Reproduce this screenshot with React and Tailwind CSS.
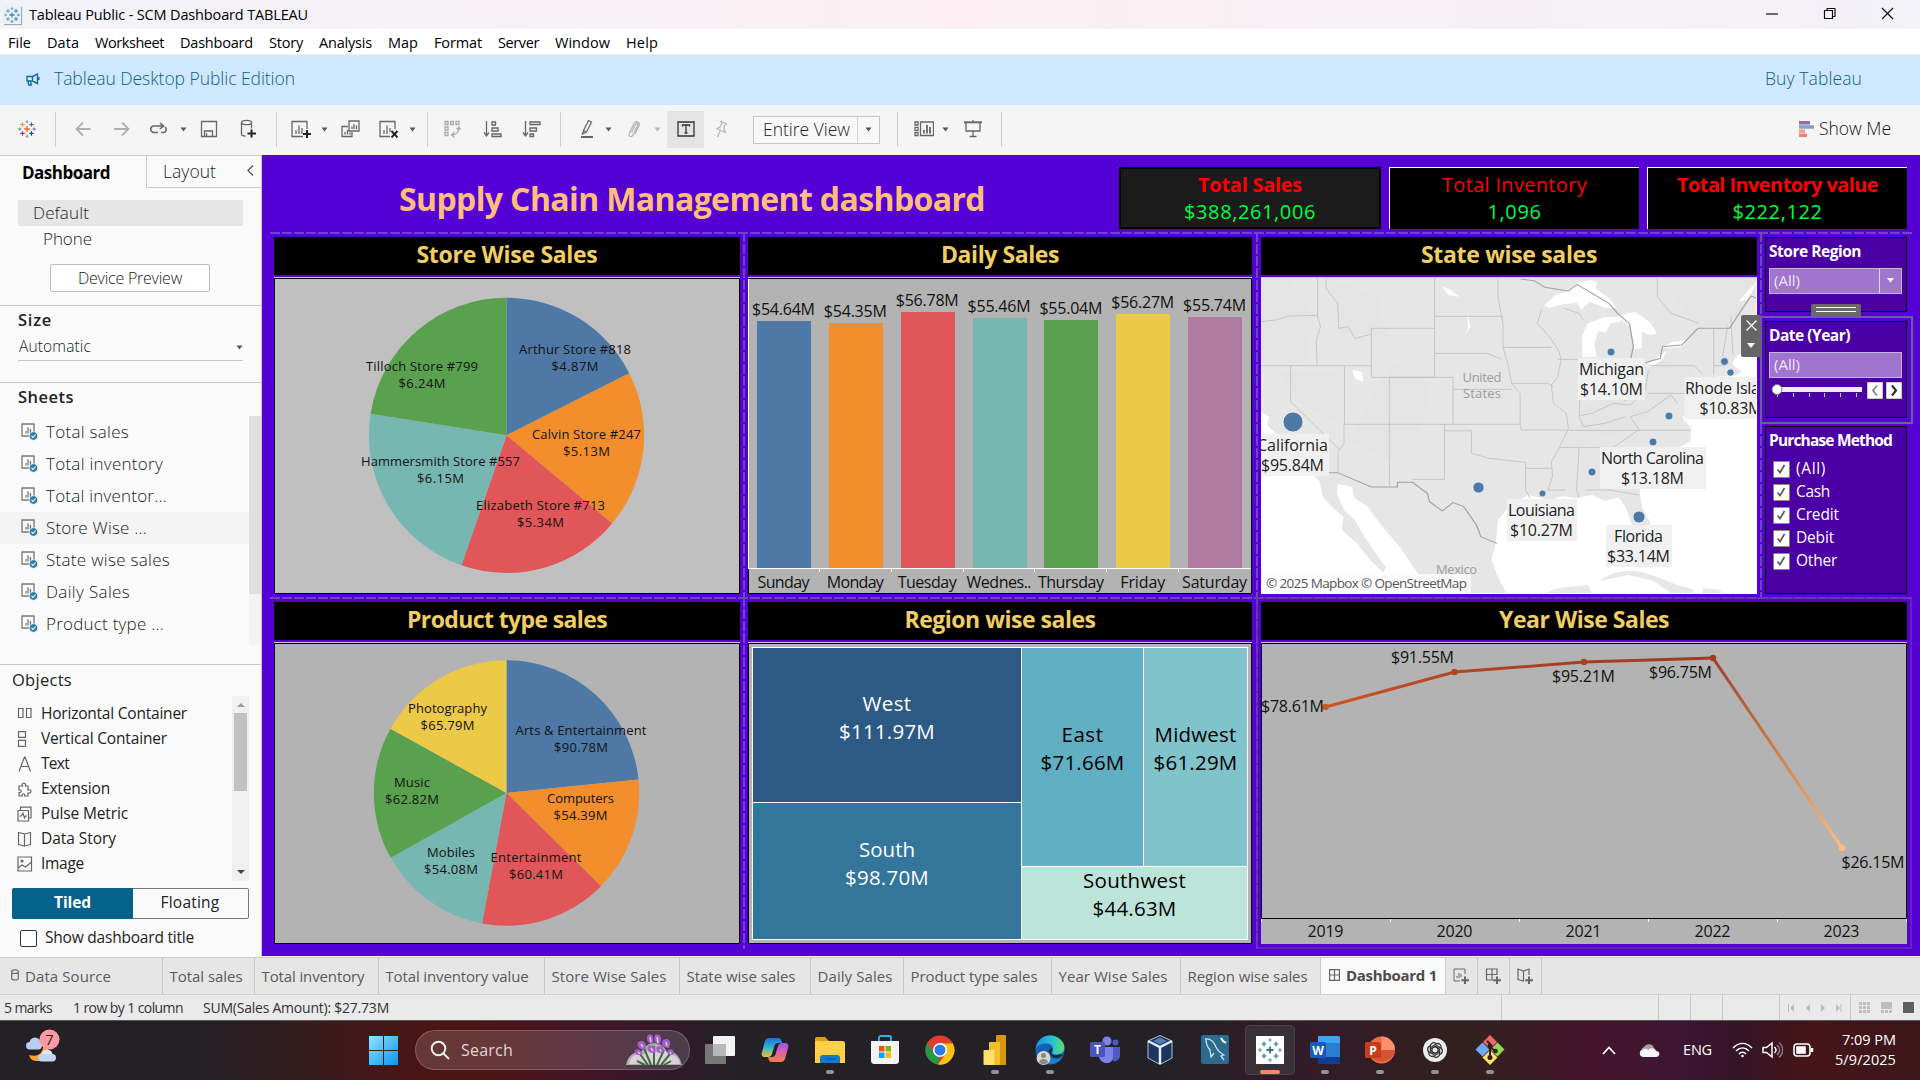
import React, { useLayoutEffect, useRef } from "react";

/* Label whose tracking is adjusted so that it spans w pixels. */
function T({ w, className = "", children }) {
  const ref = useRef(null);
  useLayoutEffect(() => {
    const el = ref.current;
    if (!w || !el) return;
    el.style.letterSpacing = "0px";
    const natural = el.getBoundingClientRect().width;
    el.style.letterSpacing = `${(w - natural) / el.textContent.length}px`;
  }, [w, children]);
  return (
    <span ref={ref} className={"block w-fit shrink-0 whitespace-nowrap leading-none " + className}>
      {children}
    </span>
  );
}

/* SVG text centred on (x, y), w pixels wide. */
function L({ x, y, w, s = 16, fill = "#111", weight = 400, children }) {
  return (
    <text x={x} y={y + s * 0.355} fontSize={s} fill={fill} fontWeight={weight} textAnchor="middle" textLength={w}>
      {children}
    </text>
  );
}

function Svg({ w = 20, h = 20, className = "", children, ...p }) {
  return (
    <svg width={w} height={h} viewBox={`0 0 ${w} ${h}`} fill="none" stroke="#666" strokeWidth="1.3" className={"shrink-0 " + className} {...p}>
      {children}
    </svg>
  );
}

const Caret = ({ className = "", light }) => (
  <Svg w={7} h={5} className={className} stroke="none" fill={light ? "#b5b5b5" : "#555"}>
    <path d="M0.5 0.5h6L3.5 4.5z" />
  </Svg>
);
const Sep = ({ className = "" }) => <div className={"h-[35px] w-px shrink-0 bg-[#cfcfcf] " + className} />;

function TableauMark({ size = 18, className = "", mono }) {
  const c = mono
    ? ["#3d85b0", "#5f9fc4", "#3d85b0", "#5f9fc4", "#3d85b0", "#5f9fc4", "#3d85b0", "#5f9fc4", "#3d85b0"]
    : ["#eb6f2d", "#e8a02c", "#5b6591", "#c62e52", "#1f457e", "#5fa3b8", "#7099a6", "#59879b", "#5f6ea0"];
  return (
    <svg width={size} height={size} viewBox="0 0 20 20" className={"shrink-0 " + className} strokeWidth="1.3">
      <path d="M10 6.8v6.4M6.8 10h6.4" stroke={c[0]} strokeWidth="1.6" />
      <path d="M5 2.6v5M2.5 5.1h5" stroke={c[1]} />
      <path d="M15 2.6v5M12.5 5.1h5" stroke={c[2]} />
      <path d="M5 12.4v5M2.5 14.9h5" stroke={c[3]} />
      <path d="M15 12.4v5M12.5 14.9h5" stroke={c[4]} />
      <path d="M10 0v4M8.2 2h3.6" stroke={c[5]} strokeWidth="1" />
      <path d="M10 16v4M8.2 18h3.6" stroke={c[6]} strokeWidth="1" />
      <path d="M2 8.2v3.6M0 10h4" stroke={c[7]} strokeWidth="1" />
      <path d="M18 8.2v3.6M16 10h4" stroke={c[8]} strokeWidth="1" />
    </svg>
  );
}

const MENU = [
  ["File", 23], ["Data", 32], ["Worksheet", 69], ["Dashboard", 73], ["Story", 34], ["Analysis", 53],
  ["Map", 30], ["Format", 48], ["Server", 41], ["Window", 55], ["Help", 32],
];

function TitleBar() {
  return (
    <div className="flex h-[29px] items-center bg-gradient-to-r from-[#f2f3f9] via-[#fbeff3] to-[#f3f2f8] pl-[3px] text-black">
      <div className="flex h-[18px] w-[18px] items-center justify-center bg-[#e9f1f6] shadow-[1px_1px_1px_#aaa]">
        <TableauMark size={16} mono />
      </div>
      <T w={279} className="ml-[8px] mt-[1px] text-[14.5px]">Tableau Public - SCM Dashboard TABLEAU</T>
      <Svg w={130} h={14} className="-mt-[3px] ml-auto mr-[25px]" stroke="#111" strokeWidth="1.2">
        <path d="M1 8h12" />
        <path d="M59.5 4.5h8v8h-8zM62 4.5v-2h8v8h-2.500" strokeLinejoin="round" />
        <path d="M117 2l11 11M128 2l-11 11" />
      </Svg>
    </div>
  );
}

function MenuBar() {
  return (
    <div className="flex h-[26px] items-center gap-[16px] border-b border-[#eee] bg-white pl-[8px] pt-[3px] text-black">
      {MENU.map(([m, w]) => <T key={m} w={w} className="text-[14.5px]">{m}</T>)}
    </div>
  );
}

function Banner() {
  return (
    <div className="flex h-[50px] items-center bg-[#cfe8fe] pb-[2px] pl-[26px] pr-[58px] text-[#1a6b93]">
      <Svg w={14} h={13} stroke="#1a6b93" strokeWidth="1.4">
        <path d="M1 3.500h5.500L11.500 1v9.500L6.500 8H1zM2 8l.7 4h2.500L4.600 8M6.500 3.500V8M12.800 4v3" />
      </Svg>
      <T w={241} className="ml-[14px] text-[17.5px] font-light text-[#0d5f8a]">Tableau Desktop Public Edition</T>
      <T w={97} className="ml-auto text-[17.5px] font-light text-[#0d5f8a]">Buy Tableau</T>
    </div>
  );
}

function Toolbar() {
  return (
    <div className="flex h-[50px] items-center bg-[#f5f5f5] pb-[2px]">
      <TableauMark size={18} className="ml-[18px]" />
      <Sep className="ml-[19px]" />
      <Svg w={16} h={16} className="ml-[19px]" stroke="#b0b0b0" strokeWidth="1.8"><path d="M15.500 8H1.500M8 1.500L1.500 8L8 14.500" /></Svg>
      <Svg w={17} h={16} className="ml-[22px]" stroke="#b0b0b0" strokeWidth="1.8"><path d="M1 8h14.500M9 1.500L15.500 8L9 14.500" /></Svg>
      <Svg w={18} h={14} className="ml-[20px]" strokeWidth="1.600"><path d="M8 10.500H4a3 3 0 010-6.500h9M10 1l3.500 3L10 7M15 5.200a3 3 0 01-1 5.300h-3" /></Svg>
      <Caret className="ml-[12px]" />
      <Svg w={18} h={18} className="ml-[13px]"><path d="M1.500 1.500h15v15h-15zM4.500 16v-5h8v5M6.500 13v3" /></Svg>
      <Svg w={17} h={20} className="ml-[22px]"><ellipse cx="6.500" cy="3.500" rx="5" ry="2.200" /><path d="M1.500 3.500v11.500c0 1 1.500 2 4 2M11.500 3.500v6" /><path d="M11.500 10.500v8M7.500 14.500h8.500" stroke="#222" strokeWidth="2" /></Svg>
      <Sep className="ml-[19px]" />
      <Svg w={20} h={18} className="ml-[14px]"><path d="M16 9V1.500H1v15h11M5 14v-4M8 14V5.500M11 14V8" /><path d="M16 10v8M12 14h8" stroke="#222" strokeWidth="2" /></Svg>
      <Caret className="ml-[10px]" />
      <Svg w={19} h={18} className="ml-[13px]"><path d="M8 1h10v10H8zM11 9V6.500M13 9V4M15.500 9V5.500M7 6.500H1v10h10V12M4 14.500V12M6.500 14.500V10M9 14.500v-2" /></Svg>
      <Svg w={20} h={18} className="ml-[19px]"><path d="M16 9V1.500H1v15h10M5 14v-4M8 14V5.500M11 12V8" /><path d="M12.500 11l6 6.500M18.500 11l-6 6.500" stroke="#222" strokeWidth="1.900" /></Svg>
      <Caret className="ml-[10px]" />
      <Sep className="ml-[11px]" />
      <Svg w={17} h={18} className="ml-[16px]" stroke="#aaa"><path d="M1 1.500h3v3H1zM6.500 1.500h3v3h-3zM12 1.500h3v3h-3zM1 7h3v3H1zM1 12.500h3v3H1zM15 7c0 5-3 8-7 8M10.500 12l-3 3 3 2.500M12.500 9.500L15 7l1.500 2.500" /></Svg>
      <Svg w={19} h={18} className="ml-[22px]"><path d="M3.500 1v14.500M1 12.500l2.500 3.500L6 12.500M9 2h3.500v3H9zM9 8h6v3H9zM9 14h9v2.500H9z" /></Svg>
      <Svg w={19} h={18} className="ml-[20px]"><path d="M3.500 1v14.500M1 12.500l2.500 3.500L6 12.500M8 2h10v2.500H8zM8 8h6.500v3H8zM8 14h3.500v2.500H8z" /></Svg>
      <Sep className="ml-[19px]" />
      <Svg w={15} h={20} className="ml-[19px]"><path d="M3.500 11.500L8.500 1.500l3 1.500-5 10zM3.500 11.500L2.500 15l4-2" /><path d="M1 18h12" strokeWidth="2" /></Svg>
      <Caret className="ml-[10px]" />
      <Svg w={15} h={18} className="ml-[14px]" stroke="#b5b5b5"><path d="M5.500 12.500l4-8c1-2 3-1 2.300.700L7 15c-1.500 3-5 1.500-3.700-1.500l4.700-10C9.500 0 14.500 2 13 5.500L9 14" /></Svg>
      <Caret className="ml-[13px]" light />
      <div className="ml-[6px] flex h-[37px] w-[37px] shrink-0 items-center justify-center bg-[#e4e4e4]">
        <Svg w={18} h={16} stroke="#333"><path d="M1 1h16v14H1zM5.500 5.500V4h7v1.500M9 4v8M7.500 12h3" /></Svg>
      </div>
      <Svg w={14} h={18} className="ml-[10px]" stroke="#b5b5b5"><path d="M6.500 1l6 3-2 1.500-.5 4 1.500 3-4.500-2-4-2 3-1.500 2-4zM6 11l-2.500 6" /></Svg>
      <div className="ml-[25px] mt-[1px] flex h-[28px] w-[127px] shrink-0 items-center border border-[#c4c4c4] bg-[#f8f8f8] pl-[9px] text-[#222]">
        <T w={87} className="text-[17.5px] font-light">Entire View</T>
        <div className="ml-auto flex h-full w-[22px] items-center justify-center border-l border-[#d4d4d4]"><Caret /></div>
      </div>
      <Sep className="ml-[17px]" />
      <Svg w={20} h={16} className="ml-[16px]"><path d="M6.500 1h13v13.500h-13zM1 1h3v3H1zM1 6.300h3v3H1zM1 11.500h3v3H1z" /><path d="M10 12.500V9M13 12.500V4M16 12.500V6" strokeWidth="1.800" /></Svg>
      <Caret className="ml-[8px]" />
      <Svg w={18} h={18} className="ml-[15px]"><path d="M0 2.300h18" strokeWidth="2" /><path d="M2 3v8h14V3M9 11v5M5.500 16.500h7M9 0v2" /></Svg>
      <Sep className="ml-[19px]" />
      <div className="ml-auto flex items-center pr-[29px]">
        <Svg w={15} h={16} stroke="none">
          <path d="M0 0h11v3.500H0z" fill="#8c72a0" /><path d="M0 4.200h15v3.500H0z" fill="#7ea4cb" />
          <path d="M0 8.400h6v3.500H0z" fill="#f6a276" /><path d="M0 12.500h8v3.500H0z" fill="#f27b86" />
        </Svg>
        <T w={72} className="ml-[5px] text-[17.5px] font-light text-[#111]">Show Me</T>
      </div>
    </div>
  );
}

const SHEETS = [
  ["Total sales", 83], ["Total inventory", 117], ["Total inventor...", 121], ["Store Wise ...", 101],
  ["State wise sales", 124], ["Daily Sales", 84], ["Product type ...", 118],
];

const OBJECTS = [
  ["Horizontal Container", 146, <path d="M1.500 2.500h4.500v9H1.500zM9.500 2.500H14v9H9.500z" />],
  ["Vertical Container", 126, <path d="M1.500 0.700h7v5.600h-7zM1.500 9.300h7v6h-7z" />],
  ["Text", 28, <path d="M2 15.500L7.500 1h.5l5.500 14.500M3.800 10.500h7.900" />],
  ["Extension", 69, <path d="M2 5h3.500c-1.500-4 4-4 3 0H11v4c4-1.500 4 4 0 3v3H7.500c1-3-3-3-2.500 0H2v-3.500c3 .5 3-3 0-2.500z" />],
  ["Pulse Metric", 87, <path d="M1 4.500h10.500v10.500H1zM3.500 4V1.200h10.500V12H12M2.500 10h2l1.500-3 1.500 5 1-2h1.500" />],
  ["Data Story", 75, <path d="M7.500 3v12L1.500 13.500V1.500zM7.500 3l6-1.500v12L7.500 15" />],
  ["Image", 43, <><path d="M1 1h13.500v14H1zM1 12l4-3 3.500 2 6-5" /><circle cx="5" cy="5" r="1" fill="#666" /></>],
];

function SheetIcon() {
  return (
    <Svg w={18} h={18} stroke="#777">
      <path d="M1 1h12v12H1zM5 10.500V8M7 10.500V4.500M9.500 10.500V6" />
      <circle cx="12.500" cy="13" r="4.300" fill="#2f7ba1" stroke="#fafafa" strokeWidth=".8" />
      <path d="M10.500 13l1.500 1.500 2.700-3" stroke="#fff" strokeWidth="1.100" />
    </Svg>
  );
}

function Sidebar() {
  return (
    <div className="flex h-[802px] w-[262px] shrink-0 flex-col border-r border-[#c4c4c4] bg-[#fafafa] text-[#222]">
      <div className="flex h-[33px] shrink-0 border-t border-[#ccc]">
        <div className="flex w-[146px] items-center pl-[22px]"><T w={88} className="text-[17px] font-bold text-black">Dashboard</T></div>
        <div className="flex grow items-center border-b border-l border-[#ccc] pl-[16px] pr-[7px]">
          <T w={53} className="text-[17.5px] font-light">Layout</T>
          <Svg w={7} h={11} className="-mt-[3px] ml-auto" stroke="#555"><path d="M6 0.500L1 5.500l5 5" /></Svg>
        </div>
      </div>
      <div className="mt-[12px] ml-[18px] flex h-[26px] w-[225px] shrink-0 items-center bg-[#e6e6e6] pb-[1px] pl-[15px]"><T w={56} className="text-[17px] font-light">Default</T></div>
      <div className="ml-[43px] flex h-[26px] shrink-0 items-center pb-[2px]"><T w={49} className="text-[17px] font-light">Phone</T></div>
      <div className="mt-[12px] ml-[50px] flex h-[28px] w-[160px] shrink-0 items-center justify-center rounded-[2px] border border-[#bdbdbd] bg-white"><T w={104} className="text-[16px] font-light">Device Preview</T></div>
      <div className="mt-[13px] h-px shrink-0 bg-[#c8c8c8]" />
      <div className="mt-[6px] ml-[18px]"><T w={34} className="text-[16.5px] font-semibold">Size</T></div>
      <div className="ml-[18px] mt-[6px] flex h-[26px] w-[225px] shrink-0 items-center border-b border-[#c4c4c4] pl-[1px]">
        <T w={72} className="text-[15.5px] font-light">Automatic</T><Caret className="ml-auto" />
      </div>
      <div className="mt-[21px] h-px shrink-0 bg-[#c8c8c8]" />
      <div className="mt-[6px] ml-[18px] h-[27px] shrink-0"><T w={56} className="text-[16.5px] font-semibold">Sheets</T></div>
      <div className="flex h-[229px] shrink-0">
        <div className="w-[249px]">
          {SHEETS.map(([n, w], i) => (
            <div key={n} className={"flex h-[32px] items-center gap-[7px] pl-[21px] " + (i === 3 ? "bg-[#f4f4f4]" : "")}>
              <SheetIcon /><T w={w} className="text-[17px] font-light">{n}</T>
            </div>
          ))}
        </div>
        <div className="w-[12px] bg-[#f3f3f3]"><div className="h-[178px] bg-[#dfdfdf]" /></div>
      </div>
      <div className="mt-[19px] h-px shrink-0 bg-[#c4c4c4]" />
      <div className="mt-[7px] ml-[12px] h-[24px] shrink-0"><T w={60} className="text-[16.5px] font-medium">Objects</T></div>
      <div className="flex h-[185px] shrink-0">
        <div className="w-[232px] pt-[6px]">
          {OBJECTS.map(([n, w, icon]) => (
            <div key={n} className="flex h-[25px] items-center pl-[17px]">
              <Svg w={16} h={16} strokeWidth="1.200">{icon}</Svg><T w={w} className="ml-[8px] text-[15.5px]">{n}</T>
            </div>
          ))}
        </div>
        <div className="flex w-[17px] flex-col items-center bg-[#f0f0f0]">
          <Svg w={8} h={17} stroke="none" fill="#999"><path d="M0 11h8L4 7z" /></Svg>
          <div className="h-[78px] w-[13px] bg-[#c1c1c1]" />
          <Svg w={8} h={17} className="mt-auto" stroke="none" fill="#444"><path d="M0 6h8L4 10z" /></Svg>
        </div>
      </div>
      <div className="ml-[12px] mt-[7px] flex h-[31px] w-[237px] shrink-0 rounded-[2px] border border-[#777] text-[15.5px]">
        <div className="-m-px flex w-[121px] items-center justify-center rounded-l-[2px] bg-[#05628a] text-white"><T w={37} className="font-bold">Tiled</T></div>
        <div className="flex grow items-center justify-center"><T w={59}>Floating</T></div>
      </div>
      <div className="mt-[11px] ml-[20px] flex shrink-0 items-center">
        <div className="h-[17px] w-[17px] rounded-[2px] border border-[#333] bg-white" />
        <T w={149} className="ml-[8px] text-[15.5px]">Show dashboard title</T>
      </div>
    </div>
  );
}

function Kpi({ className, title, tw, bold, value, vw }) {
  return (
    <div className={"flex h-full flex-col items-center pt-[7px] text-[20px] " + className}>
      <T w={tw} className={bold ? "font-bold text-[#fe0000]" : "text-[#fe0000]"}>{title}</T>
      <T w={vw} className="mt-[7px] font-medium text-[#00fe3c]">{value}</T>
    </div>
  );
}

function Panel({ title, tw, className, children }) {
  return (
    <div className={"my-[3px] flex shrink-0 flex-col " + className}>
      <div className="flex h-[38px] shrink-0 items-center justify-center bg-black pb-[3px]"><T w={tw} className="text-[23px] font-bold text-[#f1ce63]">{title}</T></div>
      <div className="mt-[2px] grow border-t border-[#d0c8dc]">{children}</div>
    </div>
  );
}

const VDash = ({ className = "" }) => (
  <div className={"flex shrink-0 justify-center " + className}>
    <div className="-my-[2px] w-[2px] bg-[repeating-linear-gradient(180deg,#6a48bd_0_10px,transparent_10px_12px)]" />
  </div>
);
const HDash = () => <div className="mx-[8px] h-[2px] shrink-0 bg-[repeating-linear-gradient(90deg,#6a48bd_0_10px,transparent_10px_12px)]" />;

const COLORS = ["#4e79a7", "#f28e2b", "#e15759", "#76b7b2", "#59a14f", "#edc948", "#b07aa1"];

function Pie({ values, cx, cy, r }) {
  const total = values.reduce((a, b) => a + b, 0);
  let a = 0;
  return values.map((v, i) => {
    const b = a + (v / total) * Math.PI * 2;
    const d = `M${cx} ${cy}L${cx + r * Math.sin(a)} ${cy - r * Math.cos(a)}A${r} ${r} 0 0 1 ${cx + r * Math.sin(b)} ${cy - r * Math.cos(b)}Z`;
    a = b;
    return <path key={i} d={d} fill={COLORS[i]} />;
  });
}

const STORES = [
  ["Arthur Store #818", "$4.87M", 575, 349.5, 112], ["Calvin Store #247", "$5.13M", 586.5, 434.5, 109],
  ["Elizabeth Store #713", "$5.34M", 540.5, 505.5, 129], ["Hammersmith Store #557", "$6.15M", 440.5, 461.5, 159],
  ["Tilloch Store #799", "$6.24M", 422, 366.5, 112],
];
const PRODUCTS = [
  ["Arts & Entertainment", "$90.78M", 581, 730.5, 131], ["Computers", "$54.39M", 580.5, 798.5, 67],
  ["Entertainment", "$60.41M", 536, 857.5, 91], ["Mobiles", "$54.08M", 451, 852.5, 48],
  ["Music", "$62.82M", 412, 782.5, 36], ["Photography", "$65.79M", 447.500, 708.5, 79],
];

const StorePie = () => (
  <svg width="466" height="316" viewBox="274 278 466 316" className="block bg-[#c0c0c0]">
    <Pie values={[4.87, 5.13, 5.34, 6.15, 6.24]} cx={506.5} cy={435.3} r={137.6} />
    {STORES.map(([n, v, x, y, w]) => (
      <g key={n}><L x={x} y={y} w={w} s={13}>{n}</L><L x={x} y={y + 17.200} w={47} s={13}>{v}</L></g>
    ))}
    <path d="M274.500 278.500h465v315h-465z" fill="none" stroke="#000" />
  </svg>
);
const ProductPie = () => (
  <svg width="466" height="301" viewBox="274 643 466 301" className="block bg-[#b3b3b3]">
    <Pie values={[90.78, 54.39, 60.41, 54.08, 62.82, 65.79]} cx={506.5} cy={793} r={132.7} />
    {PRODUCTS.map(([n, v, x, y, w]) => (
      <g key={n}><L x={x} y={y} w={w} s={13}>{n}</L><L x={x} y={y + 17.200} w={54} s={13}>{v}</L></g>
    ))}
    <path d="M274.500 643.500h465v300h-465z" fill="none" stroke="#000" />
  </svg>
);

const DAYS = [
  ["Sunday", "$54.64M", 321, 52], ["Monday", "$54.35M", 323, 57], ["Tuesday", "$56.78M", 312, 59], ["Wednes..", "$55.46M", 318, 65],
  ["Thursday", "$55.04M", 320, 66], ["Friday", "$56.27M", 314, 45], ["Saturday", "$55.74M", 317, 65],
];
const DailyBars = () => (
  <svg width="504" height="316" viewBox="748 278 504 316" className="block bg-[#b3b3b3]">
    {DAYS.map(([n, v, top, w], i) => {
      const x = 757 + i * 71.85;
      return (
        <g key={n}>
          <rect x={Math.round(x)} y={top} width="54" height={568 - top} fill={COLORS[i]} />
          <L x={x + 26.5} y={top - 12} w={63}>{v}</L>
          <L x={x + 26.5} y={582} w={w}>{n}</L>
          {i > 0 && <path d={`M${Math.round(x - 10) + 0.5} 568v4`} stroke="#fff" />}
        </g>
      );
    })}
    <path d="M748 568.5h504M748.500 568V279" stroke="#fff" />
    <path d="M748 278.500h503.500V593.500H748.500V569" fill="none" stroke="#000" />
  </svg>
);

const Cell = ({ className, n, nw, v, vw }) => (
  <div className={"flex flex-col items-center text-[20.5px] " + className}><T w={nw}>{n}</T><T w={vw} className="mt-[7.5px]">{v}</T></div>
);
const Treemap = () => (
  <div className="flex h-[301px] w-[504px] border border-black bg-[#b3b3b3] px-[3px] pb-[3px] pt-[3px] text-black">
    <div className="flex grow gap-px border border-white bg-white">
      <div className="flex w-[268px] flex-col gap-px text-white">
        <Cell className="h-[154px] bg-[#2d5985] pt-[45px]" n="West" nw={49} v="$111.97M" vw={96} />
        <Cell className="grow bg-[#34759b] pt-[36px]" n="South" nw={56} v="$98.70M" vw={84} />
      </div>
      <div className="flex grow flex-col gap-px">
        <div className="flex h-[218px] gap-px">
          <Cell className="w-[121px] bg-[#60afc2] pt-[76px]" n="East" nw={42} v="$71.66M" vw={84} />
          <Cell className="grow bg-[#81c3cb] pt-[76px]" n="Midwest" nw={82} v="$61.29M" vw={84} />
        </div>
        <Cell className="grow bg-[#bce4d8] pt-[3px]" n="Southwest" nw={103} v="$44.63M" vw={84} />
      </div>
    </div>
  </div>
);

const POINTS = [[1325.5, 707, "#cf5422"], [1454.5, 672, "#b34524"], [1584, 662, "#a63f23"], [1713, 658, "#9e3d22"], [1842, 848, "#ffbd7b"]];
const YearLine = () => (
  <svg width="646" height="301" viewBox="1261 643 646 301" className="block bg-[#b3b3b3]">
    {POINTS.slice(1).map((p, i) => {
      const q = POINTS[i];
      return (
        <g key={i}>
          <linearGradient id={"seg" + i} gradientUnits="userSpaceOnUse" x1={q[0]} y1={q[1]} x2={p[0]} y2={p[1]}>
            <stop offset="0" stopColor={q[2]} /><stop offset="1" stopColor={p[2]} />
          </linearGradient>
          <path d={`M${q[0]} ${q[1]}L${p[0]} ${p[1]}`} stroke={`url(#seg${i})`} strokeWidth="3" />
        </g>
      );
    })}
    {POINTS.map(([x, y, c]) => <circle key={x} cx={x} cy={y} r="3.200" fill={c} />)}
    <L x={1292.5} y={706.5} w={63}>$78.61M</L><L x={1422.500} y={657.5} w={63}>$91.55M</L><L x={1583.5} y={676.5} w={63}>$95.21M</L>
    <L x={1680.5} y={672.5} w={63}>$96.75M</L><L x={1873} y={862.5} w={63}>$26.15M</L>
    {[0, 1, 2, 3, 4].map((i) => <L key={i} x={1325.500 + i * 129} y={931.8} w={36}>{2019 + i}</L>)}
    <path d="M1261.500 918.500V643.500H1906.500V918.500z" fill="none" stroke="#000" />
    <path d="M1261.500 919v3M1390.500 919v3M1519.500 919v3M1648.500 919v3M1777.500 919v3M1906.500 919v3" stroke="#fff" />
  </svg>
);

const DOTS = [[1293, 422, 10], [1611, 352, 4], [1724.500, 361.500, 4], [1730.500, 372.5, 3.700], [1669, 416, 4], [1653, 442, 4], [1592, 472, 4], [1478.500, 487.500, 5.600], [1542.500, 493.500, 3.500], [1639, 517, 6]];
const STATES = [
  ["Michigan", "$14.10M", 1611.5, 369, 65, 1578, 67], ["North Carolina", "$13.18M", 1652.5, 458, 103, 1600, 106],
  ["Louisiana", "$10.27M", 1541.5, 510, 67, 1507, 70], ["Florida", "$33.14M", 1638.5, 536, 49, 1606, 66], ["California", "$95.84M", 1292.5, 445, 71, 1257, 72],
];

function StateMap() {
  return (
    <svg width="496" height="316" viewBox="1261 278 496 316" className="block bg-[#e6e6e6]">
      <g transform="translate(1250 260) scale(.4274 .33333)">
        <g fill="#dfdfdf" opacity=".22">
          <path d="M26 54L90 60 150 170 130 310 26 300zM180 54L300 110 320 230 215 215zM330 310L420 370 400 520 330 600 230 540zM60 330L200 330 200 480 120 430z" />
          <path d="M780 440L850 400 960 300 1040 320 1000 400 900 500 760 560zM960 54L1187 54 1130 200 1050 205z" />
        </g>
        <g fill="#fff">
          <path d="M26 455L45 470 40 495 60 520 75 560 100 600 145 640 163 665 170 710 195 745 218 770 215 810 250 850 285 905 312 937 318 920 300 890 268 830 245 780 220 750 203 700 206 672 238 680 245 715 275 740 310 800 350 860 395 945 450 1000 26 1000z" />
          <path d="M1187 225L1168 262 1140 285 1128 312 1150 335 1135 347 1090 350 1045 380 1015 430 1022 455 1012 475 1032 505 1030 545 1005 560 985 590 945 625 918 655 912 700 918 745 938 790 930 835 912 830 892 790 880 745 862 712 830 722 800 705 760 715 735 708 700 720 650 705 610 735 580 780 575 850 565 900 580 950 600 1000 1187 1000z" />
          <path d="M688 137L715 105 745 92 765 68 795 60 812 66 808 85 840 115 858 145 830 143 795 125 775 150 765 128 735 132 700 143z" />
          <path d="M778 292L777 230 790 190 830 172 880 170 865 185 845 190 832 218 815 213 806 250 810 290zM860 168L900 155 935 185 952 220 938 226 917 215 917 265 896 268 888 200zM925 318L960 286 975 272 965 300 935 322zM960 265L985 248 1025 238 1010 262zM240 330L262 335 265 365 245 355zM448 78L470 90 490 110 465 105zM508 155L515 200 500 230 510 205zM1142 125L1187 62 1165 118z" />
        </g>
        <path d="M820 962C850 930 900 925 940 945L1000 975 1040 990 1030 1000 985 1000 945 963 885 945zM690 1000L720 985 790 975 800 1000zM1060 985L1100 990 1105 1000 1058 1000z" fill="#e7e7e7" />
        <g fill="none" stroke="#c0c0c0" strokeWidth="2.200">
          <path d="M158 54V170L165 200 155 240 157 317M26 185L60 180 90 168 158 166M178 54V85L205 130 208 205 230 200 245 235 284 223M284 205V352H432V54M284 205H432M26 317H284M95 317V425L210 570M221 317V493M221 493H633M206 640V575L220 550V493M326 352V678M326 352H475V493M432 169H592M432 280H555L590 298M475 388H612M455 493V658H380M455 512H518V580L560 595 645 607M645 607V690L655 715M592 262H705M580 54V110L592 190V262L605 320 612 370 632 400V493L635 510H745M612 370H697L710 380M645 625H705M720 298H780M683 148L672 190 700 230 722 270 728 300 720 350 705 375 710 430 740 460 745 505 725 560 705 605 708 650 697 690H738M772 300V420L770 468M735 145L770 160 780 180M843 295V400M770 468L800 460 850 430 890 435 925 390 932 330M745 511H1030M725 562H850M770 562L764 690 770 715M820 562L840 690H785M840 690L910 705M845 565L870 545 910 509M910 509L890 470 930 455 985 405M985 405L1000 430M932 400H1048L1075 370M932 317H1040L1060 345M953 54V110L985 160 1050 190M1085 205V317H1112M1105 290L1118 200M1085 345L1085 317M1125 170L1130 285M770 470L780 500 830 490 880 470M860 400L880 425" />
        </g>
        <g fill="none" stroke="#a2a2a2" strokeWidth="3">
          <path d="M633 57L665 62 690 82 745 93 765 73 840 130 860 160 888 192 897 260 890 300M925 308L960 295 965 260 1010 255 1048 205H1122L1145 160 1172 108 1187 115M180 638H205L284 681H345V667H380L415 700 420 725 450 753 475 728 500 740 530 795 540 830 578 850" />
        </g>
      </g>
      <L x={1482} y={377} w={39} s={13} fill="#9b9b9b">United</L><L x={1482} y={393} w={38} s={13} fill="#9b9b9b">States</L>
      <L x={1456.500} y={569} w={41} s={13} fill="#9b9b9b">Mexico</L>
      {STATES.map((s) => <rect key={s[0]} x={s[5]} y={s[3] - 11} width={s[6]} height="42" fill="#f0f0f0" />)}
      <rect x="1684.500" y="377" width="73" height="42" fill="#f0f0f0" />
      {STATES.map((s) => (
        <g key={s[0]}><L x={s[2]} y={s[3]} w={s[4]} fill="#222">{s[0]}</L><L x={s[2]} y={s[3] + 20.5} w={63} fill="#222">{s[1]}</L></g>
      ))}
      <L x={1732} y={388} w={94} fill="#222">Rhode Island</L><L x={1731} y={408.5} w={63} fill="#222">$10.83M</L>
      {DOTS.map(([x, y, r]) => <circle key={x} cx={x} cy={y} r={r} fill="#4e79a7" stroke="#fff" strokeWidth=".7" />)}
      <rect x="1261" y="574" width="210" height="19" fill="#fafafa" opacity=".85" />
      <L x={1366.500} y={583.5} w={201} s={13.500} fill="#555">© 2025 Mapbox © OpenStreetMap</L>
      <path d="M1261 593.500h497M1756.500 278v316" stroke="#fff" />
    </svg>
  );
}

const Field = ({ children }) => (
  <div className="mt-[8px] flex h-[26px] items-center border border-[#c7b0e6] bg-[#9f75d0] pl-[4px] text-[#efe8f8]"><T w={26} className="text-[15px]">(All)</T>{children}</div>
);
const METHODS = [["(All)", 30], ["Cash", 34], ["Credit", 43], ["Debit", 38], ["Other", 41]];

function Filters() {
  return (
    <div className="my-[3px] flex w-[142px] shrink-0 flex-col text-white">
      <div className="relative h-[75px] border border-black bg-[#4b00a5] pl-[3px] pr-[4px] pt-[6px]">
        <T w={92} className="text-[15.5px] font-bold">Store Region</T>
        <Field><div className="ml-auto flex h-full w-[22px] items-center justify-center border-l border-[#e0d4f0]"><Svg w={7} h={5} stroke="none" fill="#fff"><path d="M0 0h7L3.500 4.500z" /></Svg></div></Field>
        <div className="absolute left-[45px] top-[66px] flex h-[13px] w-[50px] flex-col items-center gap-[3px] rounded-t-[2px] bg-[#696969] pt-[3px]">
          <div className="h-px w-[40px] bg-white" /><div className="h-px w-[40px] bg-white" />
        </div>
      </div>
      <div className="relative mt-[9px] h-[97px] border border-black bg-[#4b00a5] pl-[3px] pr-[4px] pt-[6px]">
        <div className="absolute -left-[6px] -top-[6px] h-[108px] w-[153px] border-2 border-[#69629a]" />
        <div className="absolute -left-[25px] -top-[7px] flex h-[42px] w-[20px] flex-col items-center rounded-l-[2px] bg-[#666] pt-[5px]">
          <Svg w={11} h={11} stroke="#fff"><path d="M.5.500l10 10M10.500.500l-10 10" /></Svg>
          <Svg w={8} h={5} className="mt-[12px]" stroke="none" fill="#fff"><path d="M0 0h8L4 5z" /></Svg>
        </div>
        <T w={81} className="text-[15.5px] font-bold">Date (Year)</T>
        <Field />
        <div className="mt-[4px] flex items-center">
          <Svg w={96} h={17} stroke="none">
            <path d="M4 5h89v5H4z" fill="#eee" />
            <path d="M8.500 11v4M24.500 11v4M40.500 11v4M55.500 11v4M71.500 11v4M87.500 11v4" stroke="#cfc2e0" strokeWidth="1" />
            <circle cx="8" cy="7.500" r="5" fill="#fff" stroke="#777" strokeWidth="1" />
          </Svg>
          <Svg w={16} h={17} className="ml-[2px]" stroke="#888" strokeWidth="1.800"><path d="M0 0h16v17H0z" fill="#fff" stroke="#999" strokeWidth="1" /><path d="M10 3.500L6 8.500l4 5" /></Svg>
          <Svg w={16} h={17} className="ml-[3px]" stroke="#333" strokeWidth="2.200"><path d="M0 0h16v17H0z" fill="#fff" stroke="#999" strokeWidth="1" /><path d="M6 3.500L10 8.500l-4 5" /></Svg>
        </div>
      </div>
      <div className="mt-[8px] h-[168px] border border-black bg-[#4b00a5] pl-[3px] pt-[6px]">
        <T w={123} className="text-[15.5px] font-bold">Purchase Method</T>
        <div className="mt-[9px]">
          {METHODS.map(([m, w]) => (
            <div key={m} className="flex h-[23px] items-center pl-[4px]">
              <Svg w={17} h={17} stroke="#555" strokeWidth="1.600"><path d="M0 0h17v17H0z" fill="#fff" stroke="#666" /><path d="M4.500 8.500l2.500 3 4.500-7.500" /></Svg>
              <T w={w} className="ml-[6px] text-[15.5px]">{m}</T>
            </div>
          ))}
        </div>
      </div>
    </div>
  );
}

function Dashboard() {
  return (
    <div className="flex h-[802px] grow flex-col border-b border-[#f5f5f5] bg-[#5500d4]">
      <div className="flex h-[77px] shrink-0 pb-[3px] pt-[12px]">
        <div className="flex w-[857px] pl-[137px] pt-[16px]"><T w={586} className="text-[32px] font-bold text-[#ffbe7d]">Supply Chain Management dashboard</T></div>
        <Kpi className="w-[262px] border-2 border-black bg-[#1b1b1b] !pt-[6px]" title="Total Sales" tw={104} bold value="$388,261,006" vw={132} />
        <Kpi className="ml-[8px] w-[250px] border-l border-t border-white bg-black" title="Total Inventory" tw={145} value="1,096" vw={54} />
        <Kpi className="ml-[8px] w-[260px] border-l border-t border-white bg-black" title="Total Inventory value" tw={201} bold value="$222,122" vw={90} />
      </div>
      <HDash />
      <div className="flex h-[363px] shrink-0 pl-[12px]">
        <Panel className="w-[466px]" title="Store Wise Sales" tw={181}><StorePie /></Panel>
        <VDash className="w-[8px]" />
        <Panel className="w-[504px]" title="Daily Sales" tw={118}><DailyBars /></Panel>
        <VDash className="w-[9px]" />
        <Panel className="w-[496px]" title="State wise sales" tw={176}><StateMap /></Panel>
        <VDash className="w-[8px]" />
        <Filters />
      </div>
      <HDash />
      <div className="flex h-[348px] shrink-0 pl-[12px]">
        <Panel className="w-[466px]" title="Product type sales" tw={200}><ProductPie /></Panel>
        <VDash className="w-[8px]" />
        <Panel className="w-[504px]" title="Region wise sales" tw={191}><Treemap /></Panel>
        <VDash className="w-[9px]" />
        <div className="relative">
          <Panel className="w-[646px]" title="Year Wise Sales" tw={170}><YearLine /></Panel>
          <div className="absolute -left-[5px] -top-[2px] h-[352px] w-[656px] border-2 border-[#62389f]/70" />
        </div>
      </div>
    </div>
  );
}

const TABS = [
  ["Total sales", 73, "w-[92px]"], ["Total inventory", 103, "w-[124px]"], ["Total inventory value", 143, "w-[166px]"], ["Store Wise Sales", 115, "w-[135px]"],
  ["State wise sales", 109, "w-[131px]"], ["Daily Sales", 75, "w-[93px]"], ["Product type sales", 127, "w-[148px]"], ["Year Wise Sales", 109, "w-[129px]"], ["Region wise sales", 120, "w-[140px]"],
];
const NewTab = ({ children }) => (
  <div className="flex w-[32px] items-center justify-center border-r border-[#c8c8c8]"><Svg w={17} h={17} strokeWidth="1.200">{children}<path d="M12 8.500v7.500M8.300 12.300H16" strokeWidth="2" /></Svg></div>
);

function Tabs() {
  return (
    <div className="flex h-[37px] border-t border-[#c8c8c8] bg-[#e6e6e6] text-[#5a5a5a]">
      <div className="flex w-[163px] items-center border-r border-[#c8c8c8] pl-[11px]">
        <Svg w={8} h={12} className="-mt-[3px]" strokeWidth="1.200"><path d="M.7 2.500C.7.300 7.300.300 7.300 2.500v7c0 2-6.600 2-6.600 0zM.7 3c0 2 6.600 2 6.600 0" /></Svg>
        <T w={86} className="ml-[6px] text-[15px]">Data Source</T>
      </div>
      {TABS.map(([n, w, c]) => (
        <div key={n} className={"flex shrink-0 items-center border-r border-[#c8c8c8] pl-[6.5px] " + c}><T w={w} className="text-[15px]">{n}</T></div>
      ))}
      <div className="flex w-[125px] items-center border-r border-[#c8c8c8] bg-[#fafafa] pb-[2px] pl-[8px]">
        <Svg w={11} h={12} strokeWidth="1.200"><path d="M.6.600h9.800v10.800H.6zM5.500.600v10.800M.6 6h9.800" /></Svg>
        <T w={91} className="ml-[6px] text-[15px] font-bold text-[#4c4c4c]">Dashboard 1</T>
      </div>
      <NewTab><path d="M12 6V1H1v12h6M4 10V8M6 10V5M8 9V6" strokeWidth="1" /></NewTab>
      <NewTab><path d="M12 7V1H1.500v11H8M7 1v11M1.500 6.500H12" /></NewTab>
      <NewTab><path d="M6.500 3v10L1 11.500V1l5.500 2 5.500-2v6" /></NewTab>
    </div>
  );
}

function StatusBar() {
  return (
    <div className="flex h-[26px] items-center border-t border-[#d0d0d0] bg-[#eaeaea] pl-[4px] text-[14px] text-[#333]">
      <T w={48}>5 marks</T><T w={110} className="ml-[21px]">1 row by 1 column</T><T w={186} className="ml-[20px]">SUM(Sales Amount): $27.73M</T>
      <div className="ml-auto h-full w-[157px] border-l border-[#c8c8c8]" />
      <div className="h-full w-[32px] border-l border-[#c8c8c8]" />
      <div className="h-full w-[32px] border-l border-[#c8c8c8]" />
      <div className="h-full w-[57px] border-l border-[#c8c8c8]" />
      <div className="flex h-full w-[71px] items-center border-l border-[#c8c8c8] pl-[8px]">
        <Svg w={54} h={8} stroke="none" fill="#bbb"><path d="M0 0h1v8H0zM6 0v8L2 4zM22 0v8l-4-4zM33 0v8l4-4zM48 0v8l4-4zM52.500 0h1v8h-1z" /></Svg>
      </div>
      <div className="flex h-full w-[70px] items-center gap-[11px] border-l border-[#c8c8c8] pl-[8px]">
        <Svg w={11} h={11} stroke="none" fill="#bdbdbd"><path d="M0 0h3v3H0zM4 0h3v3H4zM8 0h3v3H8zM0 4h3v3H0zM4 4h3v3H4zM8 4h3v3H8zM0 8h3v3H0zM4 8h3v3H4zM8 8h3v3H8z" /></Svg>
        <Svg w={11} h={11} stroke="none" fill="#bdbdbd"><path d="M0 0h11v7H0zM0 8h3v3H0zM4 8h3v3H4zM8 8h3v3H8z" /></Svg>
        <Svg w={11} h={11} stroke="none" fill="#5f5f5f"><path d="M0 0h11v11H0z" /></Svg>
      </div>
    </div>
  );
}

const App30 = ({ children, dot, active }) => (
  <div className="flex h-[50px] w-[55px] shrink-0 flex-col items-center px-[3px]">
    <div className={"flex h-full w-[50px] flex-col items-center rounded-[4px] pt-[10px] " + (active ? "border border-[#4a4147] bg-[#3a3137] !pt-[9px]" : "")}>
      <svg width="30" height="30" viewBox="0 0 30 30" fill="none" className="shrink-0">{children}</svg>
      {dot && <div className={"mt-[5px] h-[4px] shrink-0 rounded-full " + (active ? "w-[20px] bg-[#f5876b]" : "w-[8px] bg-[#959198]")} />}
    </div>
  </div>
);

function Taskbar() {
  return (
    <div className="flex h-[60px] items-center border-t border-[#555] bg-[linear-gradient(90deg,#242126_0,#242126_200px,#2f1d20_270px,#4a1514_420px,#4d1614_480px,#461525_570px,#33182a_660px,#242126_740px,#242126_1170px,#321b29_1290px,#32201f_1480px,#45142c_1590px,#3c1631_1680px,#351427_1740px,#451418_1810px,#3c171b_1920px)] pb-[1px] text-white">
      <svg width="40" height="40" viewBox="0 0 40 40" className="ml-[24px] -mt-[3px] shrink-0">
        <path d="M23 15c4 9-2 18-11 17-4 0-6-3-7-6 11 3 15-4 14-12z" fill="#f7a433" />
        <circle cx="11" cy="14" r="5.500" fill="#b9cdf0" /><rect x="2" y="13" width="16" height="7.500" rx="3.700" fill="#b9cdf0" />
        <circle cx="23" cy="26" r="5.500" fill="#dce6fb" /><rect x="14" y="25" width="18" height="7.500" rx="3.700" fill="#c4d5f5" />
        <circle cx="25.500" cy="10.500" r="10" fill="#ff99a4" />
        <text x="25.500" y="16" fontSize="14.500" textAnchor="middle" fill="#222">7</text>
      </svg>
      <svg width="29" height="29" viewBox="0 0 29 29" className="ml-[305px] shrink-0">
        <linearGradient id="win" x1="0" y1="0" x2="1" y2="1"><stop stopColor="#8fe5ff" /><stop offset="1" stopColor="#0a94f2" /></linearGradient>
        <path d="M0 0h14v14H0zM15 0h14v14H15zM0 15h14v14H0zM15 15h14v14H15z" fill="url(#win)" />
      </svg>
      <div className="ml-[17px] flex h-[40px] w-[275px] shrink-0 items-center rounded-full border border-white/20 bg-white/15 pl-[14px] pr-[7px]">
        <Svg w={20} h={20} stroke="#eee" strokeWidth="2"><circle cx="8.500" cy="8.500" r="6.800" /><path d="M13.500 13.500l5.500 5.500" /></Svg>
        <T w={52} className="ml-[11px] text-[16px] text-[#e0d6d8]">Search</T>
        <svg width="56" height="32" viewBox="0 0 56 32" className="ml-auto">
          <path d="M0 31C2 22 8 17 15 18 22 6 35 6 41 18 49 16 54 23 56 31z" fill="#a9b0a8" />
          <path d="M3 30c2-9 8-11 14-9l6-6 6 4 8-5 6 7c6-1 10 3 11 9z" fill="#ddd0dd" />
          <path d="M28 31V12M25 31L18 14M31 31l7-15M22 31l-8-11M35 31l9-11M19 31l-8-4M38 31l7-4" stroke="#3f6d3c" strokeWidth="2" />
          <path d="M22 1c5-2 6 3 5 9-5 0-8-5-5-9zM29 1c6-2 8 4 4 10-4-1-6-5-4-10zM12 8c5-3 9 1 8 7-6 1-10-2-8-7zM37 6c6-3 9 2 6 8-5 0-9-3-6-8zM22 12c5-2 9 1 7 7-5 1-9-2-7-7zM31 13c5-3 8 1 6 6-4 1-8-1-6-6zM9 16c4-2 7 0 7 5-5 1-8-1-7-5zM42 16c4-2 7 1 5 5-4 0-7-1-5-5z" fill="#9f5fc6" />
          <path d="M24 3l1 5M31 3l1 6M15 10l2 3M40 8l1 4M25 14l2 3M34 15l1 3M12 18l2 2M44 18l1 2" stroke="#e8bdf2" strokeWidth="1.600" />
        </svg>
      </div>
      <div className="ml-[2px] flex">
        <App30><rect x="0" y="9" width="21" height="20" rx="1" fill="#777" /><rect x="8" y="1" width="22" height="20" rx="1" fill="#f3f3f3" /><path d="M8 9h13v12H8z" fill="#b9b9b9" /></App30>
        <App30>
          <linearGradient id="cpa" x1="0" y1="0" x2="0" y2="1"><stop stopColor="#1f6fe0" /><stop offset=".5" stopColor="#2bb9d0" /><stop offset="1" stopColor="#f2c12e" /></linearGradient>
          <linearGradient id="cpb" x1="0" y1="0" x2="0" y2="1"><stop stopColor="#8a5cf0" /><stop offset=".5" stopColor="#e55fa8" /><stop offset="1" stopColor="#f47f3e" /></linearGradient>
          <path d="M9 3h9c2 0 3 1 3.500 3l.5 2h-4c-2 0-3 1-3.600 3L12 19c-.7 2-2 3-4 3H5c-3 0-4-2-3-5L5 6c.6-2 2-3 4-3z" fill="url(#cpa)" />
          <path d="M21 27h-9c-2 0-3-1-3.500-3L8 22h4c2 0 3-1 3.600-3L18 11c.7-2 2-3 4-3h3c3 0 4 2 3 5l-3 11c-.6 2-2 3-4 3z" fill="url(#cpb)" />
        </App30>
        <App30 dot><path d="M0 3.500C0 2.500 1 2 2 2h8l4 4H0z" fill="#e09c14" /><path d="M0 6h28c1 0 2 1 2 2v20H0z" fill="#ffcf45" /><path d="M5 28v-5c0-2 1-3 3-3h14c2 0 3 1 3 3v5z" fill="#0f7ad0" /><path d="M10 24h11" stroke="#0b4f93" /></App30>
        <App30><path d="M9 8V2.500C9 1.500 10 1 11 1h8c1 0 2 .5 2 1.500V8" stroke="#2eb5ef" strokeWidth="1.800" /><path d="M1 6h28v19c0 3-1 4-4 4H5c-3 0-4-1-4-4z" fill="#f4f4f4" /><path d="M9 11h5.500v5.500H9z" fill="#f25022" /><path d="M15.500 11H21v5.500h-5.500z" fill="#7fba00" /><path d="M9 17.500h5.500V23H9z" fill="#00a4ef" /><path d="M15.500 17.500H21V23h-5.500z" fill="#ffb900" /></App30>
        <App30><circle cx="15" cy="15" r="14.500" fill="#e33b2e" /><path d="M2.500 7.500L9 18.500 15 22 13 29.400A14.500 14.500 0 012.500 7.500z" fill="#279847" /><path d="M27.800 8.500H15l6 10-8 11A14.500 14.500 0 0027.800 8.500z" fill="#fbc116" /><circle cx="15" cy="15" r="7" fill="#fff" /><circle cx="15" cy="15" r="5.500" fill="#2a7de8" /></App30>
        <App30 dot><rect x="16" y="0" width="10" height="30" rx="1" fill="#d9980c" /><rect x="9" y="7" width="11" height="23" rx="1" fill="#efc130" /><rect x="3.500" y="15" width="11" height="15" rx="1" fill="#fbe06c" /></App30>
        <App30 dot>
          <linearGradient id="edge" x1="0" y1="0" x2="1" y2="0"><stop stopColor="#1c8fe0" /><stop offset=".6" stopColor="#28c5d4" /><stop offset="1" stopColor="#5fdb6a" /></linearGradient>
          <circle cx="15" cy="15" r="14.500" fill="#0e62b5" /><path d="M.5 14C2 5 8 .5 15 .5c8 0 14.500 6 14.500 12 0 5-4 7-8 7-3 0-5-1-4-3 2-4-1-8-6-8-5 0-9 2-11 5.500z" fill="url(#edge)" />
          <path d="M10 14c0 6 4 10 10 10 3 0 5-.5 7-1-3 4-7 6-12 6-6-3-8-9-5-15z" fill="#1583d6" />
          <path d="M16.500 13c2 2 0 4-.5 5 1 2.500 5 3 9 1l3 1.500-6 2.500c-5 0-8-4-8-8z" fill="#242126" />
          <circle cx="8.500" cy="23" r="7" fill="#d8d4ce" /><circle cx="8.500" cy="20.500" r="2.500" fill="#8c8883" /><path d="M4 27c1-4 8-4 9 0-2 3-7 3-9 0z" fill="#8c8883" />
        </App30>
        <App30><circle cx="17" cy="6" r="4.500" fill="#7b83eb" /><circle cx="25.500" cy="7.500" r="3" fill="#5059c9" /><path d="M19 12h11v8c0 5-4 7-7 6z" fill="#5059c9" /><path d="M9 12h14v10c0 8-12 8-14 0z" fill="#7b83eb" /><rect x="0" y="7" width="15" height="15" rx="1.500" fill="#4b53bc" /><text x="7.500" y="19" fontSize="12" fontWeight="700" textAnchor="middle" fill="#fff">T</text></App30>
        <App30><path d="M15 .5L27 6v17l-12 6.500L3 23V6z" fill="#1c355e" stroke="#b3c4d8" /><path d="M3 6l12 6 12-6M15 12v17" stroke="#e5eef7" strokeWidth="2.500" /><path d="M8 6l7-3.500L22 6l-7 3.500z" fill="#5479ab" /></App30>
        <App30><rect x="1" y="0" width="28" height="29" rx="2" fill="#2d6a8f" /><path d="M5 4c5-1 9 3 11 8 2 4 4 6 8 8l-3 1 3 4M6 4c0 5 1 8 4 11l1 7 3-4" stroke="#cfe2ec" strokeWidth="1.300" /><path d="M21 3l2 3 3 2" stroke="#fff" strokeWidth="2" /></App30>
        <App30 dot active><rect x="1" y="1" width="28" height="28" fill="#fff" /><g stroke="#2f7396" strokeWidth="1.200"><path d="M15 11.500v7M11.500 15h7" strokeWidth="1.800" /><path d="M9 6.500v5M6.500 9h5M21 6.500v5M18.500 9h5M9 18.500v5M6.500 21h5M21 18.500v5M18.500 21h5" /><path d="M15 3v4M13 5h4M15 23v4M13 25h4M5 13v4M3 15h4M25 13v4M23 15h4" stroke="#6a9cb8" /></g></App30>
        <App30 dot><rect x="8" y="1" width="22" height="28" rx="2" fill="#2b7cd3" /><path d="M8 1h20c1 0 2 1 2 2v5H8z" fill="#41a5ee" /><path d="M8 22h22v5c0 1-1 2-2 2H8z" fill="#103f91" /><rect x="0" y="7" width="16" height="16" rx="1.500" fill="#185abd" /><text x="8" y="19.500" fontSize="12" fontWeight="700" textAnchor="middle" fill="#fff">W</text></App30>
        <App30 dot><circle cx="16.500" cy="15" r="13.500" fill="#ed6c47" /><path d="M16.500 1.500A13.500 13.500 0 0130 15H16.500z" fill="#ff8f6b" /><path d="M30 15a13.500 13.500 0 01-26 3l13-3z" fill="#d35230" /><rect x="0" y="7" width="16" height="16" rx="1.500" fill="#c43e1c" /><text x="8" y="19.500" fontSize="12" fontWeight="700" textAnchor="middle" fill="#fff">P</text></App30>
        <App30 dot><circle cx="15" cy="15" r="12" fill="#ececec" /><g stroke="#333" strokeWidth="1.300"><path id="knot" d="M12 17.500v-6l4-2.500c3-1.500 6 1 5 4.500" /><use href="#knot" transform="rotate(60 15 15)" /><use href="#knot" transform="rotate(120 15 15)" /><use href="#knot" transform="rotate(180 15 15)" /><use href="#knot" transform="rotate(240 15 15)" /><use href="#knot" transform="rotate(300 15 15)" /></g></App30>
        <App30 dot><path d="M15 0l7 7-7 7-7-7z" fill="#f0696b" /><path d="M7.500 7.500l7 7-7 7-7-7z" fill="#6fa8f5" /><path d="M22.500 7.500l7 7-7 7-7-7z" fill="#8edb58" /><path d="M15 15l7.500 7.500L15 30l-7.500-7.500z" fill="#ffe06c" /><path d="M12 6l3 3v14M15 12l5 4" stroke="#3a1a18" strokeWidth="2" /><circle cx="15" cy="11" r="2.500" fill="#3a1a18" /><circle cx="20.500" cy="16" r="2.300" fill="#3a1a18" /><circle cx="15" cy="22.500" r="2.500" fill="#3a1a18" /></App30>
      </div>
      <div className="ml-auto flex items-center pr-[24px]">
        <Svg w={14} h={9} stroke="#fff" strokeWidth="1.800"><path d="M1 8l6-6.500L13 8" /></Svg>
        <svg width="21" height="15" viewBox="0 0 21 15" className="ml-[23px]"><path d="M3 10a4 4 0 012-6 5.500 5.500 0 0110 1l4 5z" fill="#a9a0a7" /><path d="M4 14a3.800 3.800 0 010-7.500c1-1 4-1 5 .5C12 4 16 5 17 8c5 .5 4 6 0 6z" fill="#f5f5f5" /></svg>
        <T w={29} className="ml-[23px] text-[14.5px]">ENG</T>
        <Svg w={21} h={16} className="ml-[20px]" stroke="#fff" strokeWidth="1.600"><path d="M1 6c6-6 13-6 19 0M4 9c4-4 9-4 13 0M7 12c2-2.300 5-2.300 7 0" /><circle cx="10.500" cy="14" r="1.300" fill="#fff" stroke="none" /></Svg>
        <Svg w={21} h={18} className="ml-[9px]" stroke="#fff" strokeWidth="1.500"><path d="M1 6.500h3.500L10 2v14l-5.500-4.500H1zM12.500 6c2 2 2 4 0 6" /><path d="M15 4c3.500 3 3.500 7 0 10M17 1.500c5 4.500 5 10.500 0 15" stroke="#8f7d85" /></Svg>
        <Svg w={21} h={14} className="ml-[10px]" stroke="#fff" strokeWidth="1.600"><rect x="1" y="1" width="16" height="12" rx="3" /><rect x="4" y="4" width="8" height="6" fill="#fff" /><path d="M19 5v4" strokeWidth="2.500" /></Svg>
        <div className="ml-[21px] flex flex-col items-end gap-[5px] text-[14.500px]"><T w={54}>7:09 PM</T><T w={61}>5/9/2025</T></div>
      </div>
    </div>
  );
}

export default function App() {
  return (
    <div className="flex h-[1080px] w-[1920px] flex-col overflow-hidden bg-white font-['Open_Sans','Noto_Sans',sans-serif]">
      <TitleBar />
      <MenuBar />
      <Banner />
      <Toolbar />
      <div className="flex h-[802px]">
        <Sidebar />
        <Dashboard />
      </div>
      <Tabs />
      <StatusBar />
      <Taskbar />
    </div>
  );
}
